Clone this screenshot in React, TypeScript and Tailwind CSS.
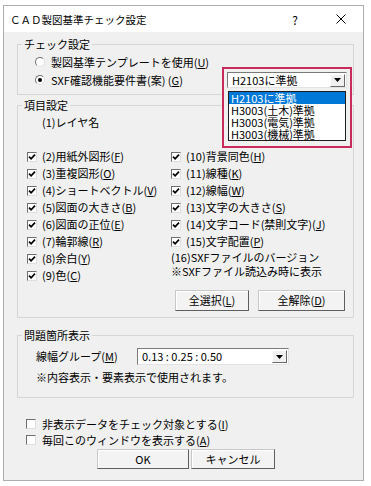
import type { ReactNode } from "react";

const Key = ({ c }: { c: string }) => <span className="underline underline-offset-[1px]">{c}</span>;

const Check = ({ checked }: { checked?: boolean }) => (
  <span className="flex h-[10px] w-[10px] shrink-0 items-center justify-center border border-t-[#6f6f6f] border-l-[#6f6f6f] border-r-[#dedede] border-b-[#dedede] bg-white">
    {checked && (
      <svg viewBox="0 0 8 8" className="h-[8px] w-[8px]">
        <path d="M1 3.6 L3.1 5.8 L7 1.6" stroke="#000" strokeWidth="1.7" fill="none" />
      </svg>
    )}
  </span>
);

const Radio = ({ on }: { on?: boolean }) => (
  <span className="flex h-[10px] w-[10px] shrink-0 items-center justify-center rounded-full border border-t-[#707070] border-l-[#707070] border-r-[#e2e2e2] border-b-[#e2e2e2] bg-white">
    {on && <span className="h-[4px] w-[4px] rounded-full bg-black" />}
  </span>
);

const Arrow = () => (
  <span className="flex h-[13px] w-[15px] items-center justify-center border border-t-[#ffffff] border-l-[#ffffff] border-r-[#6a6a6a] border-b-[#6a6a6a] bg-[#f0f0f0]">
    <svg width="7" height="4" viewBox="0 0 7 4">
      <path d="M0 0h7L3.5 4z" fill="#000" />
    </svg>
  </span>
);

const Btn = ({ w, children }: { w: string; children: ReactNode }) => (
  <div
    className={`flex h-full items-center justify-center border border-t-[#c8c8c8] border-l-[#c8c8c8] border-r-[#5e5e5e] border-b-[#5e5e5e] bg-[#f3f3f3] shadow-[inset_1px_1px_0_#ffffff] ${w}`}
  >
    {children}
  </div>
);

const Row = ({ checked, children }: { checked?: boolean; children: ReactNode }) => (
  <div className="flex h-[17px] items-center gap-[5px]">
    <Check checked={checked} />
    <span className="whitespace-nowrap">{children}</span>
  </div>
);

const leftItems: [string, string, string][] = [
  ["(2)", "用紙外図形", "F"],
  ["(3)", "重複図形", "O"],
  ["(4)", "ショートベクトル", "V"],
  ["(5)", "図面の大きさ", "B"],
  ["(6)", "図面の正位", "E"],
  ["(7)", "輪郭線", "R"],
  ["(8)", "余白", "Y"],
  ["(9)", "色", "C"],
];

const rightItems: [string, string, string][] = [
  ["(10)", "背景同色", "H"],
  ["(11)", "線種", "K"],
  ["(12)", "線幅", "W"],
  ["(13)", "文字の大きさ", "S"],
  ["(14)", "文字コード(禁則文字)", "J"],
  ["(15)", "文字配置", "P"],
];

const listItems = ["H2103に準拠", "H3003(土木)準拠", "H3003(電気)準拠", "H3003(機械)準拠"];

export default function App() {
  return (
    <div className="h-[486px] w-[371px] bg-white pl-[3px] pt-[5px] font-['Noto_Sans_CJK_JP',sans-serif] text-[11px] leading-[13px] text-black">
      <div className="relative flex h-[476px] w-[361px] flex-col border border-[#a9adb2] bg-[#f0f0f0]">
        {/* title bar */}
        <div className="flex h-[26px] shrink-0 items-center bg-white pl-[6px] pr-[12px]">
          <span className="text-[10.5px]">ＣＡＤ製図基準チェック設定</span>
          <span className="ml-auto flex w-[20px] justify-center text-[12px]">?</span>
          <span className="ml-[26px] flex w-[20px] justify-center">
            <svg width="10" height="10" viewBox="0 0 10 10">
              <path d="M0.5 0.5 L9.5 9.5 M9.5 0.5 L0.5 9.5" stroke="#000" strokeWidth="1" />
            </svg>
          </span>
        </div>

        <div className="flex flex-col pl-[13px] pr-[9px]">
          {/* check settings */}
          <fieldset className="mt-[6px] border border-[#d6d6d6]">
            <legend className="ml-[4px] px-[2px] leading-[13px]">チェック設定</legend>
            <div className="flex flex-col pb-[5px] pl-[17px] pt-[2px]">
              <div className="flex h-[18px] items-center gap-[6px]">
                <Radio />
                <span>
                  製図基準テンプレートを使用(<Key c="U" />)
                </span>
              </div>
              <div className="flex h-[18px] items-center gap-[6px]">
                <Radio on />
                <span>
                  SXF確認機能要件書(案) (<Key c="G" />)
                </span>
              </div>
            </div>
          </fieldset>

          {/* item settings */}
          <fieldset className="mt-[4px] border border-[#d6d6d6]">
            <legend className="ml-[4px] px-[2px] leading-[13px]">項目設定</legend>
            <div className="flex flex-col pb-[6px] pl-[9px]">
              <div className="mt-[4px] pl-[15px]">(1)レイヤ名</div>
              <div className="mt-[19px] flex">
                <div className="flex w-[144px] flex-col">
                  {leftItems.map(([n, t, k]) => (
                    <Row key={n} checked>
                      {n}
                      {t}(<Key c={k} />)
                    </Row>
                  ))}
                </div>
                <div className="flex flex-col">
                  {rightItems.map(([n, t, k]) => (
                    <Row key={n} checked>
                      {n}
                      {t}(<Key c={k} />)
                    </Row>
                  ))}
                  <div className="leading-[14px] whitespace-nowrap">
                    <div>(16)SXFファイルのバージョン</div>
                    <div>※SXFファイル読込み時に表示</div>
                  </div>
                  <div className="ml-[4px] mt-[12px] flex h-[21px] gap-[9px]">
                    <Btn w="w-[74px]">
                      全選択(<Key c="L" />)
                    </Btn>
                    <Btn w="w-[87px]">
                      全解除(<Key c="D" />)
                    </Btn>
                  </div>
                </div>
              </div>
            </div>
          </fieldset>

          {/* problem location display */}
          <fieldset className="mt-[11px] border border-[#d6d6d6]">
            <legend className="ml-[4px] px-[2px] leading-[13px]">問題箇所表示</legend>
            <div className="flex flex-col pb-[13px] pl-[18px] pt-[6px]">
              <div className="flex h-[17px] items-center">
                <span className="w-[101px]">
                  線幅グループ(<Key c="M" />)
                </span>
                <div className="flex h-[17px] w-[152px] items-center justify-between border border-t-[#7a7a7a] border-l-[#7a7a7a] border-r-[#e3e3e3] border-b-[#e3e3e3] bg-white pl-[4px] pr-[1px]">
                  <span>0.13 : 0.25 : 0.50</span>
                  <Arrow />
                </div>
              </div>
              <div className="mt-[6px]">※内容表示・要素表示で使用されます。</div>
            </div>
          </fieldset>

          {/* bottom options */}
          <div className="mt-[18px] flex flex-col pl-[9px]">
            <div className="flex h-[16px] items-center gap-[6px]">
              <Check />
              <span>
                非表示データをチェック対象とする(<Key c="I" />)
              </span>
            </div>
            <div className="flex h-[16px] items-center gap-[6px]">
              <Check />
              <span>
                毎回このウィンドウを表示する(<Key c="A" />)
              </span>
            </div>
          </div>
          <div className="ml-[80px] mt-[1px] flex h-[20px] gap-[2px]">
            <Btn w="w-[92px]">OK</Btn>
            <Btn w="w-[84px]">キャンセル</Btn>
          </div>
        </div>

        {/* highlighted dropdown (annotation overlay) */}
        <div className="absolute left-[218px] top-[61px] flex h-[81px] w-[130px] flex-col border-2 border-[#c92b5d] bg-[#f0f0f0]">
          <div className="ml-[3px] mt-[3px] flex h-[16px] w-[120px] items-center justify-between border border-t-[#7a7a7a] border-l-[#7a7a7a] border-r-[#e3e3e3] border-b-[#e3e3e3] bg-white pl-[4px] pr-[1px]">
            <span>H2103に準拠</span>
            <Arrow />
          </div>
          <div className="ml-[4px] mt-[3px] flex w-[118px] flex-col border border-[#1e1e1e] bg-white">
            {listItems.map((t, i) => (
              <div
                key={t}
                className={`h-[12px] pl-[2px] leading-[12px] ${i === 0 ? "bg-[#0078d7] text-white" : ""}`}
              >
                {t}
              </div>
            ))}
          </div>
        </div>
      </div>
    </div>
  );
}
